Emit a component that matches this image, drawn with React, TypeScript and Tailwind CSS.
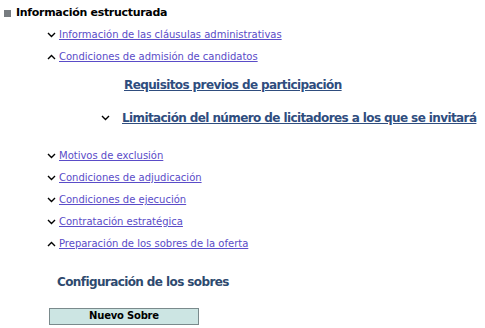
import React from 'react';

const Down = () => (
  <svg width="9" height="6" viewBox="0 0 9 6" className="shrink-0">
    <path d="M1 1 L4.5 4.5 L8 1" stroke="#000" strokeWidth="1.4" fill="none" />
  </svg>
);

const Up = () => (
  <svg width="9" height="6" viewBox="0 0 9 6" className="shrink-0">
    <path d="M1 5 L4.5 1.5 L8 5" stroke="#000" strokeWidth="1.4" fill="none" />
  </svg>
);

function Item({ open, label }: { open?: boolean; label: string }) {
  return (
    <div className="flex items-center gap-[3px] h-[22px] pl-[47px]">
      {open ? <Up /> : <Down />}
      <a href="#" className="text-[#5a4cc8] underline text-[10px] leading-none">
        {label}
      </a>
    </div>
  );
}

export default function App() {
  return (
    <div className="w-[485px] h-[328px] bg-white font-['DejaVu_Sans',sans-serif] overflow-hidden">
      <div className="flex items-center gap-[5px] pl-[4px] pt-[5px] h-[22px]">
        <span className="w-[7px] h-[7px] bg-[#777c80]" />
        <span className="font-bold text-[11px] tracking-[-0.3px] text-black">Información estructurada</span>
      </div>
      <div className="pt-[2px]">
        <Item label="Información de las cláusulas administrativas" />
        <Item open label="Condiciones de admisión de candidatos" />
      </div>
      <div className="pl-[124px] pt-[4px] h-[38px]">
        <a href="#" className="font-bold text-[12px] tracking-[-0.6px] text-[#2f4d7e] underline">
          Requisitos previos de participación
        </a>
      </div>
      <div className="flex items-center gap-[12px] pl-[101px] h-[24px]">
        <Down />
        <a href="#" className="font-bold text-[12px] tracking-[-0.6px] text-[#2f4d7e] underline whitespace-nowrap">
          Limitación del número de licitadores a los que se invitará
        </a>
      </div>
      <div className="pt-[15px]">
        <Item label="Motivos de exclusión" />
        <Item label="Condiciones de adjudicación" />
        <Item label="Condiciones de ejecución" />
        <Item label="Contratación estratégica" />
        <Item open label="Preparación de los sobres de la oferta" />
      </div>
      <div className="pl-[57px] pt-[18px] font-bold text-[12px] tracking-[-0.6px] text-[#2e4a6e]">
        Configuración de los sobres
      </div>
      <div className="pl-[49px] pt-[11px]">
        <button className="w-[150px] h-[17px] bg-[#cce5e3] border border-[#7a8a8c] text-[10px] tracking-[-0.2px] font-bold text-black leading-none">
          Nuevo Sobre
        </button>
      </div>
    </div>
  );
}
